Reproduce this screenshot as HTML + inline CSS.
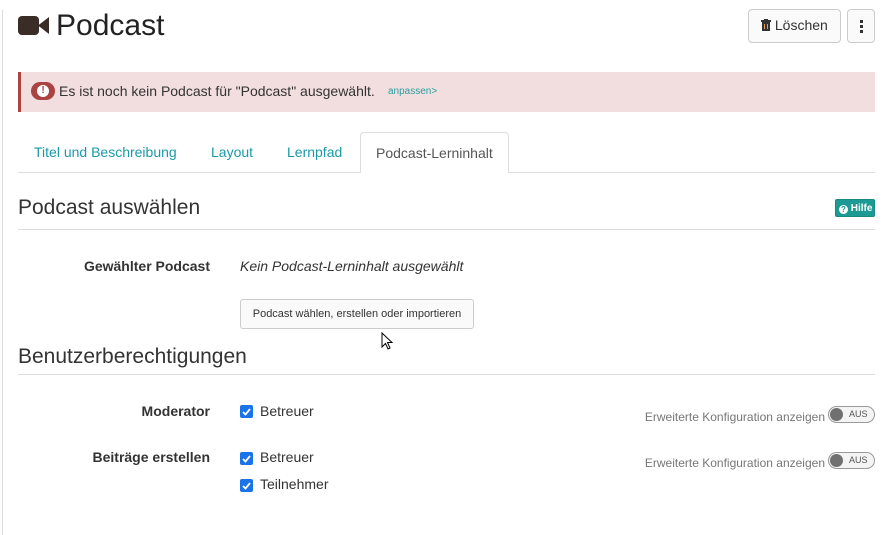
<!DOCTYPE html>
<html><head><meta charset="utf-8"><style>
*{box-sizing:border-box;margin:0;padding:0}
body{width:884px;height:535px;overflow:hidden;background:#fff;font-family:"Liberation Sans",sans-serif;color:#333;position:relative}
.a{position:absolute;white-space:nowrap}
.line{position:absolute;height:1px;background:#ddd}
.cb{position:absolute;width:13px;height:13px;background:#1a73e8;border-radius:2px}
.cb svg{position:absolute;left:1px;top:1px}
.lbl{position:absolute;font-weight:bold;font-size:14px;text-align:right;width:200px;left:10px;color:#333}
.tog{position:absolute;left:828px;width:47px;height:17px;border:1px solid #999;border-radius:9px;background:#f4f4f4}
.tog i{position:absolute;left:1px;top:1px;width:13px;height:13px;border-radius:50%;background:#707070}
.tog b{position:absolute;left:20px;top:2px;font-size:9px;font-weight:normal;color:#555}
.ek{position:absolute;right:59px;font-size:12px;color:#777}
</style></head><body>
<div style="position:absolute;left:2px;top:10px;width:1px;height:525px;background:#ddd"></div>
<svg class="a" style="left:18px;top:16px" width="31" height="19" viewBox="0 0 31 19"><rect x="0" y="0" width="21" height="19" rx="4" fill="#3a2c26"/><path d="M20 9.5 L31 1 V18 Z" fill="#3a2c26"/></svg>
<div class="a" style="left:56px;top:9px;font-size:30px;font-weight:500;color:#222">Podcast</div>
<div class="a" style="left:748px;top:9px;width:93px;height:34px;border:1px solid #ccc;border-radius:4px;background:#fafafa;font-size:14px;padding:7px 0 0 12px;color:#333"><svg width="10" height="12" viewBox="0 0 10 12" style="vertical-align:-1px"><rect x="0" y="1" width="10" height="2" fill="#333"/><rect x="3" y="0" width="4" height="1.5" fill="#333"/><rect x="1" y="3" width="8" height="9" fill="#333"/><rect x="3" y="5" width="1" height="5" fill="#e0a050"/><rect x="6" y="5" width="1" height="5" fill="#e0a050"/></svg> Löschen</div>
<div class="a" style="left:847px;top:9px;width:28px;height:34px;border:1px solid #ccc;border-radius:4px;background:#fafafa"><div style="position:absolute;left:12px;top:10px;width:3px;height:3px;background:#333;box-shadow:0 5px 0 #333,0 10px 0 #333"></div></div>
<div class="a" style="left:18px;top:72px;width:857px;height:40px;background:#f2dede;border-left:3px solid #a94442"></div>
<div class="a" style="left:31px;top:82px;width:24px;height:18px;border-radius:9px;background:#a94442"><div style="position:absolute;left:6px;top:3px;width:12px;height:12px;border-radius:50%;background:#fff;color:#a94442;font-size:10px;font-weight:bold;text-align:center;line-height:12px">!</div></div>
<div class="a" style="left:59px;top:83px;font-size:14px;color:#333">Es ist noch kein Podcast für "Podcast" ausgewählt.</div>
<div class="a" style="left:388px;top:86px;font-size:10px;color:#2a9d9d">anpassen&gt;</div>
<div class="line" style="left:18px;top:172px;width:857px"></div>
<div class="a" style="left:34px;top:144px;font-size:14px;color:#1a9aa8">Titel und Beschreibung</div>
<div class="a" style="left:211px;top:144px;font-size:14px;color:#1a9aa8">Layout</div>
<div class="a" style="left:287px;top:144px;font-size:14px;color:#1a9aa8">Lernpfad</div>
<div class="a" style="left:360px;top:132px;width:149px;height:41px;border:1px solid #ddd;border-bottom:none;border-radius:4px 4px 0 0;background:#fff;font-size:14px;color:#555;padding:12px 0 0 15px">Podcast-Lerninhalt</div>
<div class="a" style="left:18px;top:196px;font-size:21px;color:#333">Podcast auswählen</div>
<div class="a" style="left:835px;top:199px;width:40px;height:18px;background:#1d9a94;border:1px solid #178a84;border-radius:2px;color:#fff;font-size:10px;font-weight:bold;padding:3px 0 0 3px"><span style="display:inline-block;width:9px;height:9px;border-radius:50%;background:#fff;color:#1d9a94;font-size:8px;line-height:9px;text-align:center;vertical-align:-1px">?</span> Hilfe</div>
<div class="line" style="left:18px;top:229px;width:857px"></div>
<div class="lbl" style="top:258px">Gewählter Podcast</div>
<div class="a" style="left:240px;top:258px;font-size:14px;font-style:italic;color:#333">Kein Podcast-Lerninhalt ausgewählt</div>
<div class="a" style="left:240px;top:299px;width:234px;height:30px;border:1px solid #ccc;border-radius:3px;background:#fafafa;font-size:11px;color:#333;text-align:center;line-height:28px">Podcast wählen, erstellen oder importieren</div>
<svg class="a" style="left:381px;top:332px" width="13" height="19" viewBox="0 0 13 19"><path d="M1 1 V15 L4.5 11.5 L7 17 L9 16 L6.5 10.5 L11 10.5 Z" fill="#fff" stroke="#000" stroke-width="1"/></svg>
<div class="a" style="left:18px;top:345px;font-size:21px;color:#333">Benutzerberechtigungen</div>
<div class="line" style="left:18px;top:374px;width:857px"></div>
<div class="lbl" style="top:403px">Moderator</div>
<div class="cb" style="left:240px;top:405px"><svg width="11" height="11" viewBox="0 0 11 11"><path d="M2 6 L4.5 8.5 L9 3" fill="none" stroke="#fff" stroke-width="1.8"/></svg></div>
<div class="a" style="left:260px;top:403px;font-size:14px">Betreuer</div>
<div class="ek" style="top:410px">Erweiterte Konfiguration anzeigen</div>
<div class="tog" style="top:406px"><i></i><b>AUS</b></div>
<div class="lbl" style="top:449px">Beiträge erstellen</div>
<div class="cb" style="left:240px;top:452px"><svg width="11" height="11" viewBox="0 0 11 11"><path d="M2 6 L4.5 8.5 L9 3" fill="none" stroke="#fff" stroke-width="1.8"/></svg></div>
<div class="a" style="left:260px;top:449px;font-size:14px">Betreuer</div>
<div class="cb" style="left:240px;top:479px"><svg width="11" height="11" viewBox="0 0 11 11"><path d="M2 6 L4.5 8.5 L9 3" fill="none" stroke="#fff" stroke-width="1.8"/></svg></div>
<div class="a" style="left:260px;top:476px;font-size:14px">Teilnehmer</div>
<div class="ek" style="top:456px">Erweiterte Konfiguration anzeigen</div>
<div class="tog" style="top:452px"><i></i><b>AUS</b></div>
</body></html>
